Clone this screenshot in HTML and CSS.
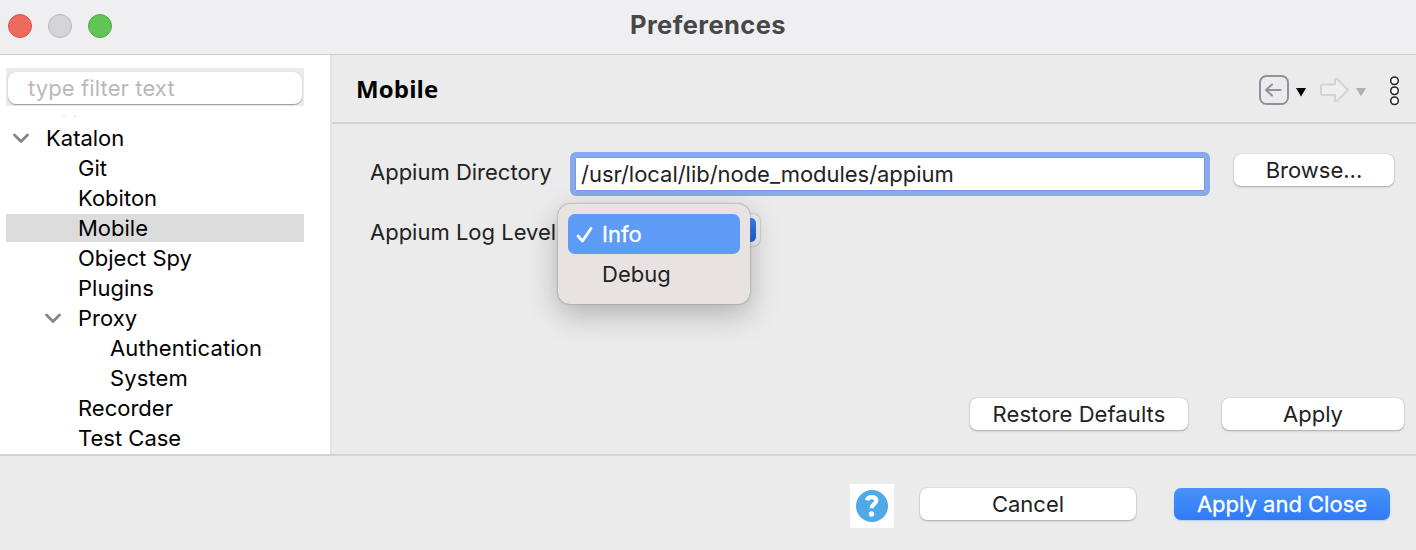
FILE: index.html
```html
<!DOCTYPE html>
<html lang="en">
<head>
<meta charset="utf-8">
<title>Preferences</title>
<link rel="stylesheet" href="styles.css">
</head>
<body>
<div class="window">
  <header class="titlebar">
    <div class="lights"><i class="light red"></i><i class="light gray"></i><i class="light green"></i></div>
    <h1 class="title">Preferences</h1>
  </header>
  <div class="main">
    <aside class="sidebar">
      <div class="filter"><div class="filter-field">type filter text</div></div>
      <div class="remnant"><i></i><i></i></div>
      <ul class="tree">
        <li class="row l0"><svg class="chevron" width="18" height="12" viewBox="0 0 18 12"><path d="M2.500 3 9 9.500l6.500-6.500"/></svg><span>Katalon</span></li>
        <li class="row l1"><span>Git</span></li>
        <li class="row l1"><span>Kobiton</span></li>
        <li class="row l1 selected"><span>Mobile</span></li>
        <li class="row l1"><span>Object Spy</span></li>
        <li class="row l1"><span>Plugins</span></li>
        <li class="row l1 open"><svg class="chevron" width="18" height="12" viewBox="0 0 18 12"><path d="M2.500 3 9 9.500l6.500-6.500"/></svg><span>Proxy</span></li>
        <li class="row l2"><span>Authentication</span></li>
        <li class="row l2"><span>System</span></li>
        <li class="row l1"><span>Recorder</span></li>
        <li class="row l1"><span>Test Case</span></li>
      </ul>
    </aside>
    <section class="page">
      <div class="page-head">
        <h2 class="page-title">Mobile</h2>
        <svg class="nav" width="150" height="36" viewBox="0 0 150 36">
          <rect x="4" y="2" width="28" height="28" rx="6.500" fill="none" stroke="#8d939b" stroke-width="2"/>
          <path d="M24.500 16H10.500M16 10.500L10 16l6 5.500" fill="none" stroke="#8d939b" stroke-width="2" stroke-linecap="round" stroke-linejoin="round"/>
          <path d="M40 14h10l-5 8.500z" fill="#000"/>
          <path d="M67 10.500h12V5h2l11 11-11 11h-2v-6H67q-2 0-2-2v-6.500q0-2 2-2z" fill="#efefef" stroke="#d3d3d3" stroke-width="2" stroke-linejoin="round"/>
          <path d="M100 14h10l-5 8.500z" fill="#b0b0b0"/>
          <g fill="#fff" stroke="#222" stroke-width="1.500"><circle cx="138.500" cy="6.700" r="3.800"/><circle cx="138.500" cy="16.700" r="3.800"/><circle cx="138.500" cy="26.700" r="3.800"/></g>
        </svg>
      </div>
      <div class="form">
        <label class="label dir-label">Appium Directory</label>
        <div class="input"><span>/usr/local/lib/node_modules/appium</span></div>
        <div class="button browse"><span>Browse...</span></div>
        <label class="label log-label">Appium Log Level</label>
        <div class="select">
          <i class="select-cap"></i>
          <div class="menu">
            <div class="item active"><svg class="check" width="20" height="20" viewBox="0 0 20 20"><path d="M3 12l4.500 5L16 4.500"/></svg><span>Info</span></div>
            <div class="item"><span>Debug</span></div>
          </div>
        </div>
      </div>
      <div class="page-actions">
        <div class="button restore"><span>Restore Defaults</span></div>
        <div class="button apply"><span>Apply</span></div>
      </div>
    </section>
  </div>
  <footer class="footer">
    <div class="help"><svg width="44" height="44" viewBox="0 0 44 44"><circle cx="22" cy="22" r="16" fill="#4fa8e8"/><path d="M17 16.300c.6-2.300 2.300-3.200 4.700-3.200 2.800 0 4.600 1.400 4.600 3.700 0 3.300-4.800 3.300-4.800 7.400" fill="none" stroke="#fff" stroke-width="4.200" stroke-linecap="butt"/><circle cx="21.500" cy="30" r="2.700" fill="#fff"/></svg></div>
    <div class="button cancel"><span>Cancel</span></div>
    <div class="button primary"><span>Apply and Close</span></div>
  </footer>
</div>
</body>
</html>
```
FILE: styles.css
```css
* { box-sizing: border-box; }
body { margin: 0; font-family: Inter, "Liberation Sans", sans-serif; font-size: 22px; line-height: 30px; color: #222; background: #ebebeb; }
.window { width: 1416px; height: 550px; display: flex; flex-direction: column; overflow: hidden; }
.titlebar { height: 55px; background: #efeef1; border-bottom: 1px solid #c9c9c9; display: grid; grid-template-columns: 1fr auto 1fr; flex: none; }
.lights { display: flex; gap: 16px; padding: 14px 0 0 8px; }
.light { width: 24px; height: 24px; border-radius: 50%; border: 1px solid; }
.red { background: #ed6a5e; border-color: #d95448; }
.gray { background: #d5d5d7; border-color: #b9b9bb; }
.green { background: #61c454; border-color: #4fac3f; }
.title { margin: 10px 0 0; font-size: 25.500px; line-height: 30px; font-weight: 700; letter-spacing: .4px; color: #474747; }
.main { height: 401px; display: flex; border-bottom: 2px solid #d3d3d3; flex: none; }
.sidebar { width: 332px; background: #fff; border-right: 2px solid #e3e3e3; padding: 13px 0 0 6px; overflow: hidden; }
.filter { width: 298px; height: 38px; background: #ebebeb; padding: 4px 2px 1px; }
.filter-field { height: 32px; border-radius: 8px; background: #fff; color: #b9b9b9; padding: 1px 20px; letter-spacing: .12px; box-shadow: 0 0 1px #aaa, 0 1px 1px #999; }
.remnant { height: 17px; padding: 10px 0 0 57px; display: flex; gap: 9px; }
.remnant i { width: 2px; height: 1px; background: #d5d5d5; }
.tree { list-style: none; margin: 0; padding: 0; color: #000; }
.row { width: 298px; height: 30px; display: flex; align-items: center; }
.l0 { padding-left: 6px; gap: 16px; }
.l1 { padding-left: 72px; }
.l2 { padding-left: 104px; letter-spacing: .1px; }
.open { padding-left: 38px; gap: 16px; }
.selected { background: linear-gradient(#dcdcdc, #dcdcdc) 0 1px / 100% 28px no-repeat; }
.chevron { fill: none; stroke: #858585; stroke-width: 2.800; stroke-linecap: round; stroke-linejoin: round; }
.page { flex: 1; display: flex; flex-direction: column; }
.page-head { height: 69px; flex: none; border-bottom: 2px solid #d3d3d3; display: flex; justify-content: space-between; padding: 19px 10px 0 24px; }
.page-title { margin: 0; font-size: 24px; line-height: 30px; font-weight: 700; letter-spacing: .15px; color: #000; font-family: "Open Sans", sans-serif; }
.form { display: grid; grid-template-columns: 200px 640px 1fr; grid-template-rows: 44px 40px; row-gap: 12px; padding: 28px 22px 0 38px; }
.label { white-space: nowrap; }
.dir-label { padding-top: 5px; }
.log-label { padding-top: 9px; }
.input { background: #fff; border: 5px solid #88a9ea; border-radius: 6px; height: 44px; padding: 2px 6px; letter-spacing: -.03px; outline: 1px solid #779bdf; outline-offset: -6px; }
.button { height: 32px; border-radius: 7px; background: #fff; display: flex; justify-content: center; line-height: 32px; box-shadow: 0 0 1px #999, 0 1px 2px #aaa; }
.browse { width: 160px; margin: 2px 0 0 24px; }
.select { position: relative; width: 190px; height: 32px; margin-top: 6px; border-radius: 7px; background: #efefef; box-shadow: 0 0 2px #888; display: flex; justify-content: flex-end; padding: 4px; }
.select-cap { width: 28px; height: 24px; border-radius: 5px; background: linear-gradient(#3884ee, #1d62d4); }
.menu { position: absolute; left: -12px; top: -10px; width: 192px; height: 100px; padding: 10px; border-radius: 12px; background: #e8e2e2; box-shadow: 0 0 2px #777, 0 10px 30px rgba(0,0,0,.25); }
.item { height: 40px; padding-left: 34px; line-height: 40px; border-radius: 7px; }
.active { background: #5d9bf7; color: #fff; display: flex; align-items: center; gap: 7px; padding-left: 7px; -webkit-text-stroke: .3px #fff; }
.check { fill: none; stroke: #fff; stroke-width: 2.800; stroke-linecap: round; stroke-linejoin: round; }
.page-actions { margin-top: auto; display: flex; justify-content: flex-end; gap: 34px; padding: 0 12px 24px; }
.restore { width: 218px; letter-spacing: .08px; }
.apply { width: 182px; }
.footer { flex: 1; display: flex; padding: 28px 26px 0; justify-content: flex-end; }
.help { width: 44px; height: 44px; background: #fff; }
.cancel { width: 216px; margin: 4px 38px 0 26px; }
.primary { width: 216px; margin-top: 4px; color: #fff; background: linear-gradient(#4892f8, #2f7bf6); box-shadow: 0 1px 2px #b5c9ee; -webkit-text-stroke: .3px #fff; }
```
